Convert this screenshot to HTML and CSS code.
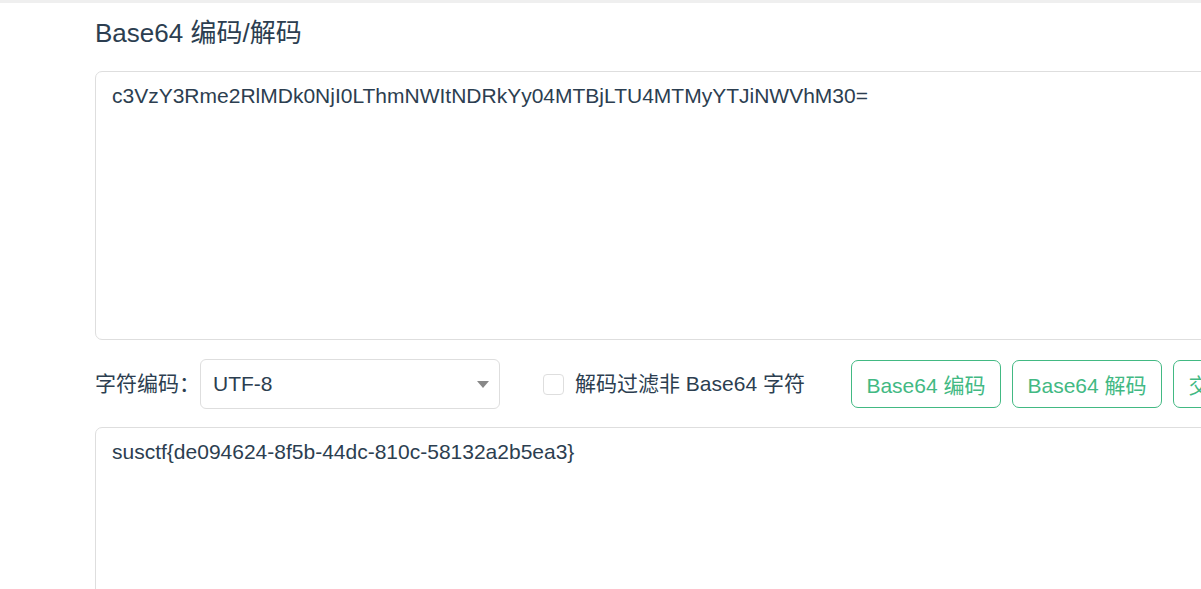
FILE: index.html
```html
<!DOCTYPE html>
<html lang="zh-CN">
<head>
<meta charset="utf-8">
<title>Base64 编码/解码</title>
<link rel="stylesheet" href="styles.css">
</head>
<body>
<div class="topbar"></div>
<main class="page">
  <h1 class="title">Base64 编码/解码</h1>
  <textarea class="box box-input" spellcheck="false">c3VzY3Rme2RlMDk0NjI0LThmNWItNDRkYy04MTBjLTU4MTMyYTJiNWVhM30=</textarea>
  <div class="controls">
    <label class="field-label">字符编码：</label>
    <div class="select">
      <span class="select-value">UTF-8</span>
      <span class="select-arrow"></span>
    </div>
    <label class="check">
      <span class="check-box"></span>
      <span class="check-text">解码过滤非 Base64 字符</span>
    </label>
    <div class="buttons">
      <button class="btn">Base64 编码</button>
      <button class="btn">Base64 解码</button>
      <button class="btn">交换输入输出</button>
    </div>
  </div>
  <textarea class="box box-output" spellcheck="false">susctf{de094624-8f5b-44dc-810c-58132a2b5ea3}</textarea>
</main>
</body>
</html>
```

FILE: styles.css
```css
* {
  box-sizing: border-box;
}

html, body {
  margin: 0;
  padding: 0;
  background: #ffffff;
  overflow: hidden;
}

body {
  font-family: "Liberation Sans", Arial, "Noto Sans CJK SC", sans-serif;
  color: #2c3e50;
}

.topbar {
  height: 3px;
  background: #efefef;
}

.page {
  width: 1400px;
  padding-left: 95px;
}

.title {
  margin: 15px 0 0 0;
  font-size: 26px;
  font-weight: normal;
  line-height: 30px;
  color: #2c3e50;
}

.box {
  display: block;
  width: 1200px;
  border: 1px solid #dedede;
  border-radius: 7px;
  padding: 12px 16px;
  font-family: "Liberation Sans", Arial, "Noto Sans CJK SC", sans-serif;
  font-size: 21px;
  line-height: 24px;
  color: #2c3e50;
  resize: none;
  outline: none;
  background: #fff;
}

.box-input {
  margin-top: 23px;
  height: 269px;
}

.box-output {
  margin-top: 18px;
  height: 260px;
}

.controls {
  display: flex;
  align-items: center;
  margin-top: 19px;
  height: 50px;
}

.field-label {
  font-size: 21px;
  width: 105px;
  white-space: nowrap;
  position: relative;
  top: -2px;
}

.select {
  width: 300px;
  height: 50px;
  border: 1px solid #dedede;
  border-radius: 6px;
  display: flex;
  align-items: center;
  justify-content: space-between;
  padding: 0 10px 0 12px;
}

.select-value {
  font-size: 21px;
}

.select-arrow {
  width: 0;
  height: 0;
  border-left: 6px solid transparent;
  border-right: 6px solid transparent;
  border-top: 7px solid #888;
}

.check {
  display: flex;
  align-items: center;
  margin-left: 43px;
}

.check-box {
  width: 21px;
  height: 21px;
  border: 1px solid #dedede;
  border-radius: 4px;
  margin-right: 11px;
}

.check-text {
  font-size: 21px;
  white-space: nowrap;
  position: relative;
  top: -2px;
}

.buttons {
  display: flex;
  gap: 11px;
  margin-left: 46px;
}

.btn {
  height: 48px;
  padding: 0 14.5px;
  border: 1px solid #42b983;
  border-radius: 7px;
  background: #fff;
  color: #42b983;
  font-family: "Liberation Sans", Arial, "Noto Sans CJK SC", sans-serif;
  font-size: 21px;
  white-space: nowrap;
}
```
